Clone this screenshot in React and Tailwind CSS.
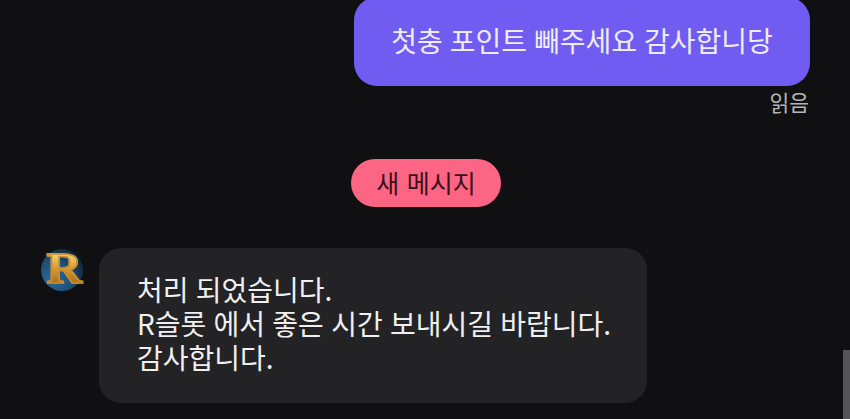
const font = { fontFamily: '"Noto Sans CJK KR", "Noto Sans", sans-serif' };

function Avatar() {
  return (
    <div className="relative w-[42px] h-[42px] mt-[1px] rounded-full shrink-0 flex items-center justify-center bg-[radial-gradient(circle_at_30%_70%,#2f6c9c_0%,#1d4d75_45%,#0f2436_80%,#8a6a2c_100%)]">
      <span
        className="text-[45px] leading-[44px] font-bold ml-[4px] -mt-[5px] scale-x-110 text-[#dca23c] bg-[linear-gradient(180deg,#f6d67e_15%,#d99c34_50%,#a8701c_85%)] bg-clip-text [-webkit-text-fill-color:transparent] [-webkit-text-stroke:1.5px_#c98f2e]"
        style={{ fontFamily: '"Liberation Serif", serif' }}
      >
        R
      </span>
    </div>
  );
}

export default function App() {
  return (
    <div className="relative w-[850px] h-[419px] overflow-hidden bg-[#101012] text-white" style={font}>
      <div className="flex flex-col items-end pr-[40px] -mt-[3px]">
        <div className="w-[456px] h-[89px] rounded-[23px] bg-[#705cf0] flex items-center justify-center pb-[4px] text-[28px] leading-none [word-spacing:0.7px] text-[#eeecfa]">
          첫충 포인트 빼주세요 감사합니당
        </div>
        <div className="mt-[1px] pr-[1px] text-[21.5px] leading-[30px] text-[#b5b5b5]">읽음</div>
      </div>

      <div className="flex justify-center mt-[42px]">
        <div className="ml-[2px] w-[150px] h-[48px] rounded-full bg-[#fc6583] flex items-center justify-center pb-[2px] text-[25px] leading-none [word-spacing:2px] text-[#3a1019]">
          새 메시지
        </div>
      </div>

      <div className="flex items-start gap-[16px] mt-[41px] pl-[41px]">
        <Avatar />
        <div className="w-[548px] h-[155px] rounded-[22px] bg-[#232325] pt-[24px] pl-[38px] text-[28px] leading-[34px] [word-spacing:1px] text-[#f0f0f0]">
          <div>처리 되었습니다.</div>
          <div>R슬롯 에서 좋은 시간 보내시길 바랍니다.</div>
          <div>감사합니다.</div>
        </div>
      </div>

      <div className="absolute right-0 top-[350px] w-[7px] h-[69px] bg-[#555557]" />
    </div>
  );
}
